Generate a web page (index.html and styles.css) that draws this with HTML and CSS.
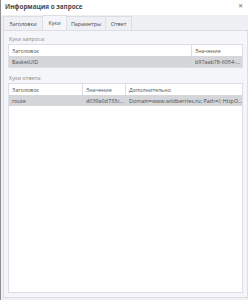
FILE: index.html
```html
<!DOCTYPE html>
<html lang="ru">
<head>
    <meta charset="UTF-8">
    <title>Информация о запросе</title>
    <link rel="stylesheet" href="styles.css">
</head>
<body>
    <div class="window">
        <div class="titlebar">
            <span class="title">Информация о запросе</span>
            <span class="close">✕</span>
        </div>

        <div class="tabs">
            <div class="tab">Заголовки</div>
            <div class="tab active">Куки</div>
            <div class="tab">Параметры</div>
            <div class="tab">Ответ</div>
        </div>

        <div class="panel">
            <div class="label">Куки запроса:</div>
            <table class="grid grid-request">
                <tr class="head">
                    <td class="c-name">Заголовок</td>
                    <td class="c-value">Значение</td>
                </tr>
                <tr class="selected">
                    <td>BasketUID</td>
                    <td>b97aab78-6054-...</td>
                </tr>
            </table>

            <div class="label">Куки ответа:</div>
            <div class="grid-wrap">
                <table class="grid grid-response">
                    <tr class="head">
                        <td class="c-name">Заголовок</td>
                        <td class="c-value">Значение</td>
                        <td>Дополнительно</td>
                    </tr>
                    <tr class="selected">
                        <td>route</td>
                        <td>d039a0d733c...</td>
                        <td>Domain=www.wildberries.ru; Path=/; HttpO...</td>
                    </tr>
                </table>
            </div>
        </div>
    </div>
</body>
</html>
```

FILE: styles.css
```css
html, body {
    margin: 0;
    padding: 0;
}

body {
    width: 248px;
    height: 300px;
    overflow: hidden;
    font-family: "Open Sans", "Noto Sans", sans-serif;
    font-size: 5.4px;
    color: #555;
}

.window {
    height: 300px;
    background-color: #eff0f4;
    border-left: 1px solid #8e8e8e;
    display: flex;
    flex-direction: column;
    box-sizing: border-box;
}

.titlebar {
    height: 15px;
    background-color: #fff;
    display: flex;
    align-items: center;
    justify-content: space-between;
    padding: 0 5px 3px 4px;
    box-sizing: border-box;
}

.title {
    font-weight: bold;
    font-size: 6.3px;
    color: #4a4a4a;
}

.close {
    font-size: 6px;
    color: #666;
}

/* Tab strip */
.tabs {
    display: flex;
    padding: 1px 0 0 2px;
    height: 15px;
    box-sizing: border-box;
}

.tab {
    width: 38px;
    text-align: center;
    line-height: 14px;
    border: 1px solid #dcdee3;
    border-bottom: none;
    border-left: none;
    color: #4a4a4a;
}

.tab:first-child {
    border-left: 1px solid #dcdee3;
}

.tab.active {
    width: 23px;
    background-color: #f5f6f9;
    margin-top: -1px;
    line-height: 15px;
}

.tab:last-child {
    width: 25px;
}

/* Content panel */
.panel {
    flex: 1;
    margin: 0 0 2px 2px;
    background-color: #f5f6f9;
    border: 1px solid #dcdee3;
    padding: 3px 4px 4px 4px;
    display: flex;
    flex-direction: column;
}

.label {
    color: #8a8a8a;
    line-height: 10px;
    padding-left: 1px;
}

.grid {
    width: 100%;
    border-collapse: collapse;
    table-layout: fixed;
    background-color: #fff;
}

.grid td {
    height: 11px;
    padding: 0 2px 0 3px;
    white-space: nowrap;
    overflow: hidden;
    border-left: 1px solid #dcdee3;
}

.grid td:first-child {
    border-left: none;
}

.grid .selected td {
    background-color: #d5d6da;
    border-left-color: #d5d6da;
    color: #4a4a4a;
}

.grid-request {
    border: 1px solid #dcdee3;
    margin-bottom: 5px;
}

.grid-request .c-value {
    width: 45px;
}

.grid-wrap {
    flex: 1;
    background-color: #fff;
    border: 1px solid #dcdee3;
}

.grid-response .c-name {
    width: 68px;
}

.grid-response .c-value {
    width: 37px;
}
```
